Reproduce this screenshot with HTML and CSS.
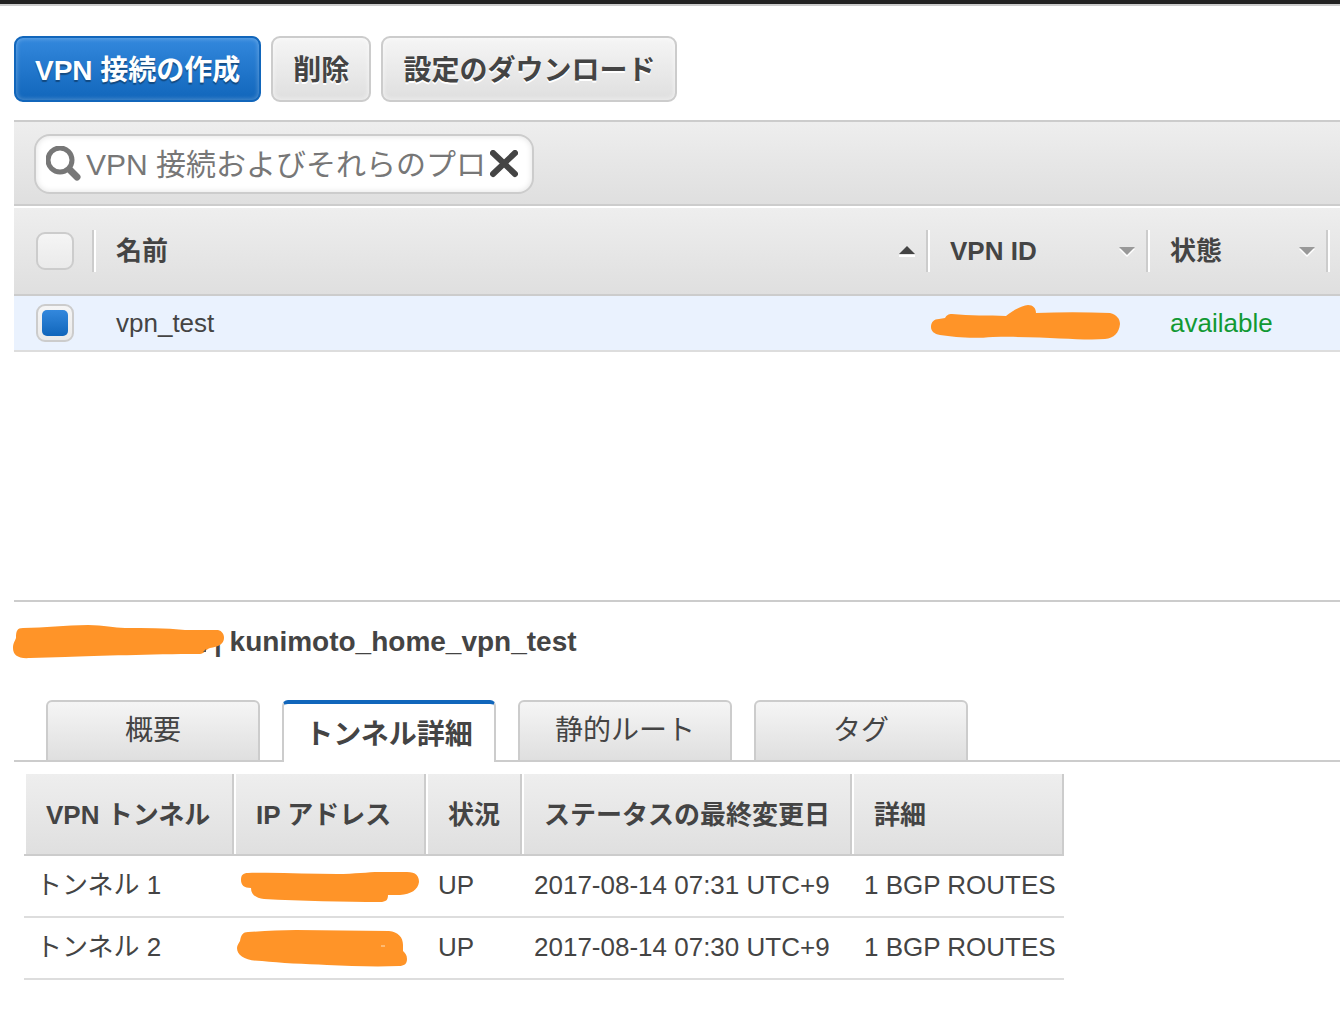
FILE: index.html
```html
<!DOCTYPE html>
<html lang="ja">
<head>
<meta charset="utf-8">
<meta name="viewport" content="width=device-width, initial-scale=1">
<title>VPN 接続</title>
<link rel="stylesheet" href="styles.css">
</head>
<body>
<div class="topbar"></div>
<main class="page">
  <div class="actions">
    <button type="button" class="btn btn-primary">VPN 接続の作成</button>
    <button type="button" class="btn">削除</button>
    <button type="button" class="btn">設定のダウンロード</button>
  </div>

  <div class="toolbar">
    <div class="search">
      <svg class="search-icon" viewBox="0 0 36 36" aria-hidden="true">
        <path d="M24 24L31 31" stroke="#777" stroke-width="7" stroke-linecap="round"/>
        <circle cx="14" cy="14" r="12" fill="none" stroke="#777" stroke-width="5"/>
      </svg>
      <input class="search-input" type="text" aria-label="検索" placeholder="VPN 接続およびそれらのプロ">
      <button type="button" class="search-clear" aria-label="クリア">
        <svg viewBox="0 0 28 28" aria-hidden="true"><path d="M3 3L25 24M25 3L3 24" stroke="#444" stroke-width="6" stroke-linecap="round"/></svg>
      </button>
    </div>
  </div>

  <div class="list">
    <table class="vpn-table">
      <colgroup><col class="col-check"><col><col class="col-id"><col class="col-state"><col class="col-rest"></colgroup>
      <thead>
        <tr>
          <th><div class="head-cell head-check"><input type="checkbox" class="check" aria-label="すべて選択"></div></th>
          <th><div class="head-cell">名前
            <svg class="sort" viewBox="0 0 16 12" aria-hidden="true"><path d="M0 11h16" stroke="#fff" stroke-width="2"/><path d="M8 1L16 9H0z" fill="#444"/></svg></div></th>
          <th><div class="head-cell">VPN ID
            <svg class="sort" viewBox="0 0 16 12" aria-hidden="true"><path d="M0 4L8 12L16 4z" fill="#fff"/><path d="M0 2H16L8 10z" fill="#999"/></svg></div></th>
          <th><div class="head-cell">状態
            <svg class="sort" viewBox="0 0 16 12" aria-hidden="true"><path d="M0 4L8 12L16 4z" fill="#fff"/><path d="M0 2H16L8 10z" fill="#999"/></svg></div></th>
          <th></th>
        </tr>
      </thead>
      <tbody>
        <tr>
          <td class="cell-check"><input type="checkbox" class="check" aria-label="vpn_test" checked></td>
          <td>vpn_test</td>
          <td class="cell-mask">
            <svg class="mask mask-id" viewBox="930 296 220 54" aria-hidden="true"><path d="M931 327C931 322 934 319 939 319L945 318C947 315 948 314 952 314C970 316 988 315 1006 316C1013 310 1021 306 1028 305C1033 305 1036 308 1036 313C1060 312 1085 312 1110 313C1117 315 1120 319 1120 324C1119 333 1114 338 1105 339C1080 341 1050 336 993 337C970 339 955 337 940 335C934 334 931 331 931 327Z"/></svg>
          </td>
          <td class="state-ok">available</td>
          <td></td>
        </tr>
      </tbody>
    </table>
  </div>

  <section class="detail">
    <h2 class="detail-title">
      <svg class="mask mask-title" viewBox="14 622 200 40" aria-hidden="true"><path d="M13 648C13 643 15 641 16 638C16 631 17 628 23 628C45 628 65 625 88 625C104 625 114 628 125 628C145 628 165 628 185 630H218C222 631 224 634 224 638C224 644 218 647 210 648C205 650 204 654 200 654C150 654 100 656 65 657L30 658C18 659 13 655 13 648Z"/><path class="mask-dot" d="M203 652L206 649V652Z"/></svg>
      <span>| kunimoto_home_vpn_test</span>
    </h2>
    <div class="tabs" role="tablist">
      <button type="button" class="tab" role="tab">概要</button>
      <button type="button" class="tab tab-active" role="tab" aria-selected="true">トンネル詳細</button>
      <button type="button" class="tab" role="tab">静的ルート</button>
      <button type="button" class="tab" role="tab">タグ</button>
    </div>
    <table class="tunnel-table">
      <colgroup><col class="col-tunnel"><col class="col-ip"><col class="col-status"><col class="col-changed"><col class="col-detail"></colgroup>
      <thead>
        <tr><th>VPN トンネル</th><th>IP アドレス</th><th>状況</th><th>ステータスの最終変更日</th><th>詳細</th></tr>
      </thead>
      <tbody>
        <tr>
          <td>トンネル 1</td>
          <td class="cell-mask"><svg class="mask mask-ip" viewBox="234 856 192 60" aria-hidden="true"><path d="M241 880C241 875 243 873 248 873C278 872 308 874 337 874C355 874 368 872 379 872H407C416 872 419 876 419 882C418 890 411 894 400 895H388C388 900 386 902 380 902C345 902 300 901 264 899C256 898 251 895 251 888C244 888 241 885 241 880Z"/></svg></td>
          <td>UP</td><td>2017-08-14 07:31 UTC+9</td><td>1 BGP ROUTES</td>
        </tr>
        <tr>
          <td>トンネル 2</td>
          <td class="cell-mask"><svg class="mask mask-ip" viewBox="234 918 192 60" aria-hidden="true"><path d="M237 948C237 945 239 943 240 941C241 935 243 932 248 932C265 931 280 930 296 930L389 931C398 932 403 937 403 945V951C405 953 407 955 407 959C407 964 404 966 399 966C375 967 350 966 327 965C305 964 280 963 262 961C246 961 237 956 237 948Z"/><path class="mask-speck" d="M381 946H385"/></svg></td>
          <td>UP</td><td>2017-08-14 07:30 UTC+9</td><td>1 BGP ROUTES</td>
        </tr>
      </tbody>
    </table>
  </section>
</main>
</body>
</html>
```
FILE: styles.css
```css
* { box-sizing: border-box; }

body {
  margin: 0;
  background: #fff;
  color: #444;
  font-family: "Liberation Sans", "Noto Sans CJK JP", sans-serif;
  font-size: 26px;
  line-height: 36px;
}

button, input { font-family: inherit; color: inherit; }

.topbar {
  height: 6px;
  background: #222;
  border-bottom: 2px solid #ccc;
}

.page { padding: 30px 0 36px 14px; }

.actions {
  display: flex;
  gap: 10px;
  margin-bottom: 18px;
}

.btn {
  height: 66px;
  padding: 4px 20px 0;
  border: 2px solid #ccc;
  border-radius: 9px;
  background: linear-gradient(#f5f5f5, #dfdfdf);
  box-shadow: inset 0 0 4px 1px rgba(255, 255, 255, .5);
  font-size: 28px;
  font-weight: bold;
  line-height: 36px;
  white-space: nowrap;
  text-shadow: 0 2px 0 #fff;
}

.btn-primary {
  padding: 4px 19px 0;
  border-color: #1166bb;
  background: linear-gradient(#3388dd, #1166bb);
  box-shadow: inset 0 0 4px 1px rgba(255, 255, 255, .25);
  color: #fff;
  text-shadow: 0 2px 1px rgba(0, 0, 0, .35);
}

.toolbar {
  padding: 12px 20px 10px;
  border-top: 2px solid #ccc;
  border-bottom: 2px solid #ccc;
  background: linear-gradient(#eee, #dfdfdf);
}

.search {
  display: flex;
  align-items: center;
  width: 500px;
  max-width: 100%;
  height: 60px;
  padding: 0 12px 0 10px;
  border: 2px solid #ccc;
  border-radius: 16px;
  background: #fff;
  box-shadow: inset 0 0 6px rgba(0, 0, 0, .12);
}

.search-icon { flex: none; width: 36px; height: 36px; }

.search-input {
  flex: 1;
  min-width: 0;
  margin-left: 4px;
  padding: 2px 0 0;
  border: 0;
  outline: 0;
  background: none;
  font-size: 30px;
  line-height: 44px;
}

.search-input::placeholder { color: #777; opacity: 1; }

.search-clear {
  flex: none;
  width: 28px;
  height: 28px;
  margin-left: 2px;
  margin-right: 2px;
  padding: 0;
  border: 0;
  background: none;
}

.search-clear svg { display: block; }

table {
  border-collapse: separate;
  border-spacing: 0;
  table-layout: fixed;
}

th, td { padding: 0; text-align: left; white-space: nowrap; }

.list { min-height: 394px; }

.vpn-table { width: 100%; }
.col-check { width: 82px; }
.col-id { width: 220px; }
.col-state { width: 180px; }
.col-rest { width: 10px; }

.vpn-table th {
  height: 90px;
  border-top: 2px solid #fff;
  border-bottom: 2px solid #ccc;
  background: linear-gradient(#eee, #dfdfdf) padding-box;
}

.head-cell {
  display: flex;
  align-items: center;
  justify-content: space-between;
  height: 42px;
  padding: 0 15px 0 20px;
  box-shadow: inset -2px 0 #fff, inset -4px 0 #ccc;
}

.head-check { padding-left: 22px; }

.sort { width: 16px; height: 12px; }

.vpn-table td {
  height: 56px;
  padding-left: 20px;
  border-bottom: 2px solid #ddd;
  background: #eaf2fe;
}

.vpn-table .cell-check { padding-left: 22px; }
.vpn-table .state-ok { color: #119933; }

.check {
  display: block;
  appearance: none;
  width: 38px;
  height: 38px;
  margin: 0;
  padding: 4px;
  border: 2px solid #ccc;
  border-radius: 9px;
  background: linear-gradient(#f5f5f5, #eaeaea);
}

.check:checked::before {
  content: "";
  display: block;
  width: 26px;
  height: 26px;
  border-radius: 5px;
  background: linear-gradient(#3388dd, #1166bb);
}

.vpn-table .cell-mask, .tunnel-table .cell-mask { padding: 0; }

.mask { display: block; overflow: visible; fill: #ff9428; }
.mask-id { width: 220px; height: 54px; }
.mask-ip { width: 192px; height: 60px; }
.mask-title { position: relative; z-index: 1; flex: none; width: 200px; height: 40px; }
.mask-dot { fill: #555; }
.mask-speck { stroke: #ffe0b8; }

.detail { border-top: 2px solid #ccc; }

.detail-title {
  display: flex;
  align-items: center;
  margin: 0;
  padding: 20px 0 38px;
  font-size: 28px;
  line-height: 40px;
}

.tabs {
  display: flex;
  gap: 22px;
  padding-left: 32px;
  background: linear-gradient(#ccc, #ccc) bottom / 100% 2px no-repeat;
}

.tab {
  width: 214px;
  height: 62px;
  padding: 0;
  border: 2px solid #ccc;
  border-radius: 6px 6px 0 0;
  background: linear-gradient(#f5f5f5, #dfdfdf);
  font-size: 28px;
  line-height: 36px;
}

.tab-active {
  padding: 4px 0 0;
  border-top: 4px solid #1166bb;
  border-bottom: 0;
  background: #fff;
  font-weight: bold;
}

.tunnel-table { width: 1040px; margin: 12px 0 0 10px; }
.col-tunnel { width: 210px; }
.col-ip { width: 192px; }
.col-status { width: 96px; }
.col-changed { width: 330px; }
.col-detail { width: 212px; }

.tunnel-table th {
  height: 82px;
  padding-left: 22px;
  background: linear-gradient(#eee, #dfdfdf);
  box-shadow: inset 0 -2px #ccc, inset 2px 0 #fff, inset -2px 0 #ccc;
}

.tunnel-table td {
  height: 62px;
  padding: 0 0 2px 12px;
  border-bottom: 2px solid #ddd;
}
```
